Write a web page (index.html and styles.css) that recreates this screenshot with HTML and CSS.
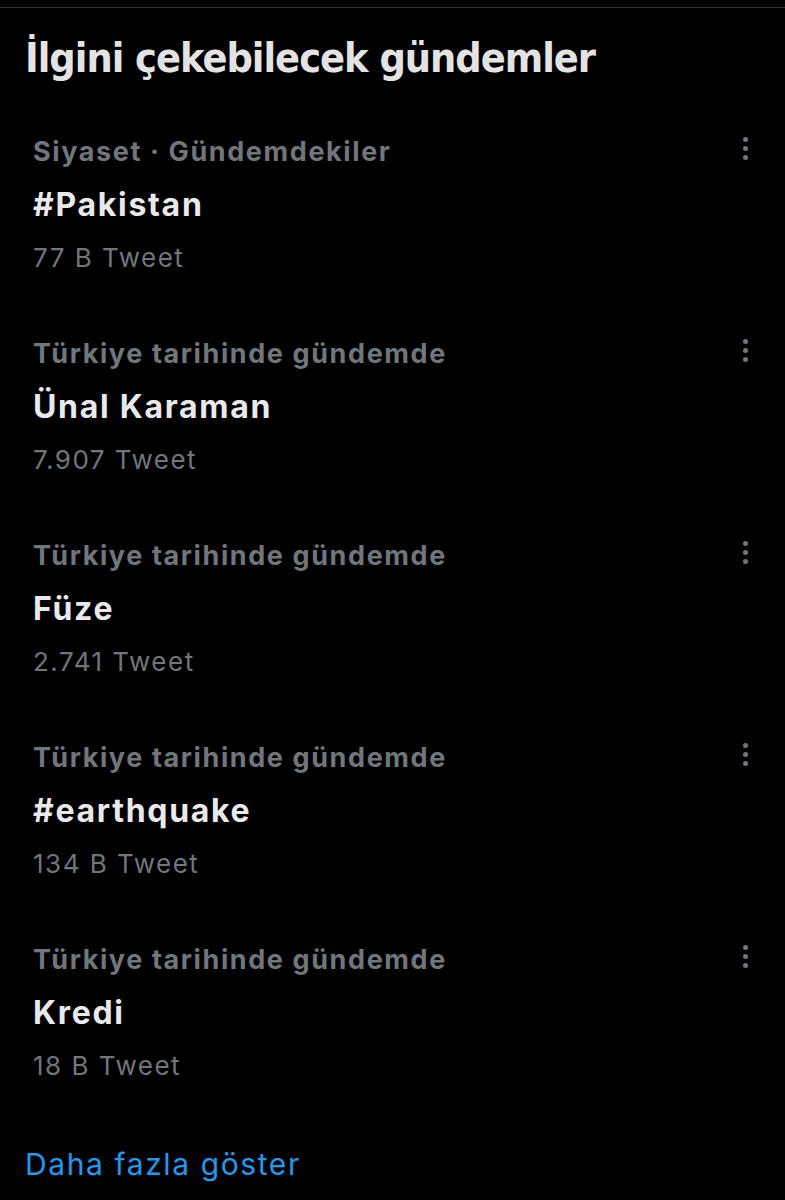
FILE: index.html
```html
<!DOCTYPE html>
<html lang="tr">
<head>
<meta charset="utf-8">
<link rel="stylesheet" href="styles.css">
</head>
<body>
<div class="top-gap"></div>
<section class="panel">
  <h1 class="panel-title">İlgini çekebilecek gündemler</h1>
  <ul class="trends">
    <li class="trend">
      <div class="trend-body">
        <div class="trend-cat">Siyaset · Gündemdekiler</div>
        <div class="trend-name">#Pakistan</div>
        <div class="trend-count">77 B Tweet</div>
      </div>
      <div class="more"><span></span><span></span><span></span></div>
    </li>
    <li class="trend">
      <div class="trend-body">
        <div class="trend-cat">Türkiye tarihinde gündemde</div>
        <div class="trend-name">Ünal Karaman</div>
        <div class="trend-count">7.907 Tweet</div>
      </div>
      <div class="more"><span></span><span></span><span></span></div>
    </li>
    <li class="trend">
      <div class="trend-body">
        <div class="trend-cat">Türkiye tarihinde gündemde</div>
        <div class="trend-name">Füze</div>
        <div class="trend-count">2.741 Tweet</div>
      </div>
      <div class="more"><span></span><span></span><span></span></div>
    </li>
    <li class="trend">
      <div class="trend-body">
        <div class="trend-cat">Türkiye tarihinde gündemde</div>
        <div class="trend-name">#earthquake</div>
        <div class="trend-count">134 B Tweet</div>
      </div>
      <div class="more"><span></span><span></span><span></span></div>
    </li>
    <li class="trend">
      <div class="trend-body">
        <div class="trend-cat">Türkiye tarihinde gündemde</div>
        <div class="trend-name">Kredi</div>
        <div class="trend-count">18 B Tweet</div>
      </div>
      <div class="more"><span></span><span></span><span></span></div>
    </li>
  </ul>
  <a class="show-more" href="#">Daha fazla göster</a>
</section>
</body>
</html>
```
FILE: styles.css
```css
html, body {
  margin: 0;
  padding: 0;
  background: #000;
}
body {
  font-family: "Inter", "Liberation Sans", sans-serif;
  color: #e7e9ea;
  height: 1200px;
  overflow: hidden;
}
.top-gap {
  height: 7px;
}
.panel {
  border-top: 1px solid #2f3336;
}
.panel-title {
  margin: 0;
  padding: 23px 0 36px 25px;
  height: 54px;
  font-family: "DejaVu Sans Condensed", "DejaVu Sans", sans-serif;
  font-weight: 700;
  font-size: 41px;
  line-height: 54px;
  letter-spacing: -1px;
  color: #e3e3e3;
  white-space: nowrap;
}
.trends {
  list-style: none;
  margin: 0;
  padding: 0;
}
.trend {
  display: flex;
  justify-content: space-between;
  padding: 11px 0 0 33px;
  height: 191px;
}
.trend-body {
  display: flex;
  flex-direction: column;
}
.trend-cat {
  font-size: 27px;
  font-weight: 700;
  letter-spacing: 1.6px;
  color: #71767b;
  line-height: 40px;
  white-space: nowrap;
}
.trend-name {
  margin-top: 6px;
  font-size: 32px;
  font-weight: 700;
  letter-spacing: 1.7px;
  color: #e7e9ea;
  line-height: 53px;
  white-space: nowrap;
}
.trend-count {
  margin-top: 1px;
  font-size: 26px;
  font-weight: 400;
  letter-spacing: 1.5px;
  color: #71767b;
  line-height: 51px;
  white-space: nowrap;
}
.more {
  display: flex;
  flex-direction: column;
  gap: 4px;
  padding: 5px 37px 0 0;
}
.more span {
  width: 5px;
  height: 5px;
  border-radius: 50%;
  background: #71767b;
}
.show-more {
  display: block;
  padding: 0 0 0 25px;
  margin-top: 13px;
  font-size: 30px;
  letter-spacing: 1.6px;
  line-height: 40px;
  color: #1d9bf0;
  text-decoration: none;
}
```
